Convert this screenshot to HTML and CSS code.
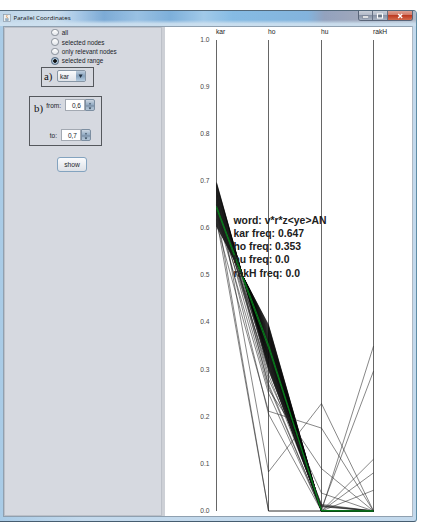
FILE: index.html
```
<!DOCTYPE html>
<html lang="en">
<head>
<meta charset="utf-8">
<title>Parallel Coordinates</title>
<link rel="stylesheet" href="styles.css">
</head>
<body>
<div class="window">
  <header class="titlebar">
    <svg class="app-icon" width="8" height="8" viewBox="0 0 8 8"><rect x=".5" y=".5" width="7" height="7" fill="#eef0ef" stroke="#8b9aaa" stroke-width=".7"/><path d="M4.3 1Q2.8 2.2 4 3.2T3.8 4.4" fill="none" stroke="#d98c4b" stroke-width=".8"/><path d="M2 5h3.8M2.3 6.2h3.2" stroke="#5780a5" stroke-width=".8"/></svg>
    <h1>Parallel Coordinates</h1>
    <div class="controls">
      <span class="ctl min"><svg width="13" height="10" viewBox="0 0 13 10"><rect x="3.5" y="5" width="6" height="2" fill="#fff" stroke="#5b6472" stroke-width=".4"/></svg></span>
      <span class="ctl max"><svg width="14" height="10" viewBox="0 0 14 10"><rect x="4.5" y="3" width="5" height="4" fill="#6b7787" stroke="#fff" stroke-width="1.1"/></svg></span>
      <span class="ctl close"><svg width="24" height="10" viewBox="0 0 24 10"><path d="M10.2 3l4 4M14.2 3l-4 4" stroke="#fff" stroke-width="1.3"/></svg></span>
    </div>
  </header>
  <main class="content">
    <section class="panel">
      <div class="options">
        <label><i class="radio"></i>all</label>
        <label><i class="radio"></i>selected nodes</label>
        <label><i class="radio"></i>only relevant nodes</label>
        <label><i class="radio on"></i>selected range</label>
      </div>
      <div class="group group-a">
        <span class="tag">a)</span>
        <div class="combo"><span>kar</span><b><svg width="9" height="10" viewBox="0 0 9 10"><path d="M2.6 3.6h4L4.6 7z" fill="#203040"/></svg></b></div>
      </div>
      <div class="group group-b">
        <span class="tag">b)</span>
        <div class="fields">
          <div class="field"><span>from:</span><div class="spinner"><span>0,6</span><b><svg width="9" height="12" viewBox="0 0 9 12"><path d="M0 6h9" stroke="#5d7085" stroke-width=".7"/><path d="M3.3 4h2.4L4.5 2.4zM3 7.8h3L4.5 9.8z" fill="#26384a"/></svg></b></div></div>
          <div class="field to"><span>to:</span><div class="spinner"><span>0,7</span><b><svg width="9" height="12" viewBox="0 0 9 12"><path d="M0 6h9" stroke="#5d7085" stroke-width=".7"/><path d="M3.3 4h2.4L4.5 2.4zM3 7.8h3L4.5 9.8z" fill="#26384a"/></svg></b></div></div>
        </div>
      </div>
      <button class="show">show</button>
    </section>
    <section class="plot">
      <svg id="chart" width="246" height="489" viewBox="165 27 246 489"></svg>
    </section>
  </main>
</div>
<script src="chart.js"></script>
</body>
</html>
```
FILE: styles.css
```
* { box-sizing: border-box; }
body { margin: 0; background: #fff; font-family: "Liberation Sans", Arial, sans-serif; font-size: 6.5px; color: #20242a; overflow: hidden; }
.window {
  width: 417px; height: 512px; margin-top: 10px; padding: 0 3px 4px 3px;
  border: 1px solid #53697b; border-left: 0; border-right-color: #5f8ca5; border-bottom: 1.5px solid #465d70;
  border-radius: 0 4px 3px 0; background: linear-gradient(90deg, #a9cbe6, #c3d9ec 20%, #c3d9ec);
}
.titlebar {
  display: flex; align-items: flex-start; height: 15px; margin: 0 -3px; padding-left: 3px; border-radius: 0 3px 0 0;
  background: linear-gradient(180deg, rgba(255,255,255,.12) 0 60%, rgba(205,224,239,.95) 85%),
    linear-gradient(90deg, #b5cfe5 0, #c4d9e9 13%, #a2c5e5 18%, #6a9fd0 25%, #8bb8df 33%, #6ba4d5 41%, #94c2e6 49%, #75b2e0 56%, #72a9d8 74%, #8495b5 78%, #929cb3 86%, #a4afc0 100%);
}
.app-icon { margin-top: 3px; }
h1 { margin: 3px 0 0 2.5px; font: 6.1px/8px "Open Sans", sans-serif; color: #111; white-space: nowrap; }
.controls { display: flex; margin-left: auto; margin-right: 3px; height: 10px; border: 1px solid #596579; border-top: 0; border-radius: 0 0 3px 3px; overflow: hidden; }
.ctl { display: flex; background: linear-gradient(#c8ced8, #b2bac8 45%, #8792a5 50%, #a9b3c2); border-right: 1px solid #667184; }
.ctl svg { display: block; }
.close { background: linear-gradient(#dda092, #d17765 45%, #bd3b22 50%, #d36a4d); border: 0; }
.content { display: flex; height: 491px; border: 1px solid #8fa0b0; border-right: 2px solid #aeb9c4; }
.panel {
  display: flex; flex-direction: column; align-items: flex-start; flex: none; width: 160px; padding-top: 1px;
  background: #d6d9e0; border-right: 2px solid #cdd0d6; box-shadow: inset 0 0 0 1px #bcc0c8;
}
.options { margin-left: 47px; }
.options label { display: flex; align-items: center; gap: 3.2px; height: 9.4px; font-size: 6.35px; white-space: nowrap; }
.radio { width: 7.6px; height: 7.6px; border: .8px solid #888f99; border-radius: 50%; background: linear-gradient(#fff, #e1e4e9); }
.radio.on { border-color: #50677e; background: radial-gradient(circle, #111 0 1.5px, #a8bed2 2.1px); }
.group { display: flex; border: 1px solid #55585d; }
.group-a { width: 53px; height: 20px; margin: 1px 0 0 37px; padding: 3px 0 0 2px; }
.tag { flex: none; font: 10.8px/13px "Liberation Serif", serif; color: #111; }
.group-a .tag { width: 13px; margin-top: -1px; }
.combo { display: flex; width: 29px; height: 12px; margin-top: -1px; border: 1px solid #8796a5; border-radius: 2px; background: linear-gradient(#fafbfc, #dfe3e9); line-height: 11px; }
.combo span { width: 18px; padding-left: 2px; }
.combo b { display: flex; width: 9px; background: linear-gradient(#bdcddd, #87a3be 50%, #b4cce0); }
.group-b { width: 73px; height: 50px; margin: 9px 0 0 25px; padding: 2px 0 0 4px; }
.group-b .tag { width: 13px; margin-top: 3px; }
.fields { display: flex; flex-direction: column; }
.field { display: flex; justify-content: flex-end; gap: 4px; width: 48px; height: 12px; line-height: 13px; }
.to { width: 44px; margin-top: 18px; }
.spinner { display: flex; width: 30px; flex: none; height: 12px; }
.spinner span { width: 20px; height: 12px; padding-right: 3px; text-align: right; background: #fff; border: .5px solid #a3a9b2; line-height: 11px; }
.spinner b { display: flex; width: 10px; background: linear-gradient(#cbd6e2, #91aac2 50%, #b3c5d6); border: .5px solid #7c8ea1; border-radius: 0 2px 2px 0; }
.show { width: 30px; height: 15px; margin: 11px 0 0 53px; padding: 0; font: 6.7px "Liberation Sans", sans-serif; color: #20242a; border: 1.5px solid #83a3bf; border-radius: 3px; background: linear-gradient(#fafbfd, #dde1e7); }
.plot { flex: none; width: 248px; border-left: 1px solid #cdd0d6; background: #fff; }
#chart { display: block; }
.tick, .name { font-size: 6.7px; fill: #484848; }
.name { fill: #222; }
.axis { stroke: #555; stroke-width: .9; }
.row { fill: none; stroke: #222; stroke-width: .55; }
.dense { fill: none; stroke: #080808; stroke-width: .65; }
.highlight { fill: none; stroke: #07851c; stroke-width: .9; }
.info { font-size: 10.4px; font-weight: bold; fill: #202020; }
```
FILE: chart.js
```
const svg = document.getElementById('chart');
const axes = [216.5, 268.5, 321.5, 373.5];
const names = ['kar', 'ho', 'hu', 'rakH'];
const y = v => 511 - v * 471;

function add(tag, attrs, text) {
  const el = document.createElementNS('http://www.w3.org/2000/svg', tag);
  for (const k in attrs) el.setAttribute(k, attrs[k]);
  if (text) el.textContent = text;
  svg.appendChild(el);
}
function row(values, cls) {
  add('polyline', { class: cls, points: values.map((v, i) => axes[i] + ',' + y(v)).join(' ') });
}

for (let i = 0; i <= 10; i++) {
  add('text', { class: 'tick', x: 209.6, y: y(i / 10) + 1.8, 'text-anchor': 'end' }, (i / 10).toFixed(1));
}
axes.forEach((x, i) => {
  add('line', { class: 'axis', x1: x, x2: x, y1: 40, y2: 511 });
  add('text', { class: 'name', x: x - .5, y: 33.5 }, names[i]);
});

for (let i = 0; i < 42; i++) {
  const kar = .605 + i * .00225;
  row([kar, 1 - kar, 0, 0], 'dense');
}
[
  [.62, 0, 0, 0], [.64, 0, 0, 0], [.69, .083, .228, 0],
  [.61, .212, .176, 0], [.65, .206, 0, .11], [.655, .258, .09, 0],
  [.68, .28, .038, 0], [.63, .25, 0, .35], [.66, .29, .005, .297],
  [.67, .27, 0, .081], [.69, .265, 0, .044], [.67, .305, .012, 0],
  [.65, .31, .009, 0], [.685, .30, .014, 0], [.64, .32, .011, 0],
  [.635, .30, .01, 0]
].forEach(v => row(v, 'row'));
row([.647, .353, 0, 0], 'highlight');
row([.643, .347, .001, 0], 'highlight');

['word: v*r*z<ye>AN', 'kar freq: 0.647', 'ho freq: 0.353', 'hu freq: 0.0', 'rakH freq: 0.0']
  .forEach((line, i) => add('text', { class: 'info', x: 233.5, y: 223.8 + i * 13.2 }, line));
```
